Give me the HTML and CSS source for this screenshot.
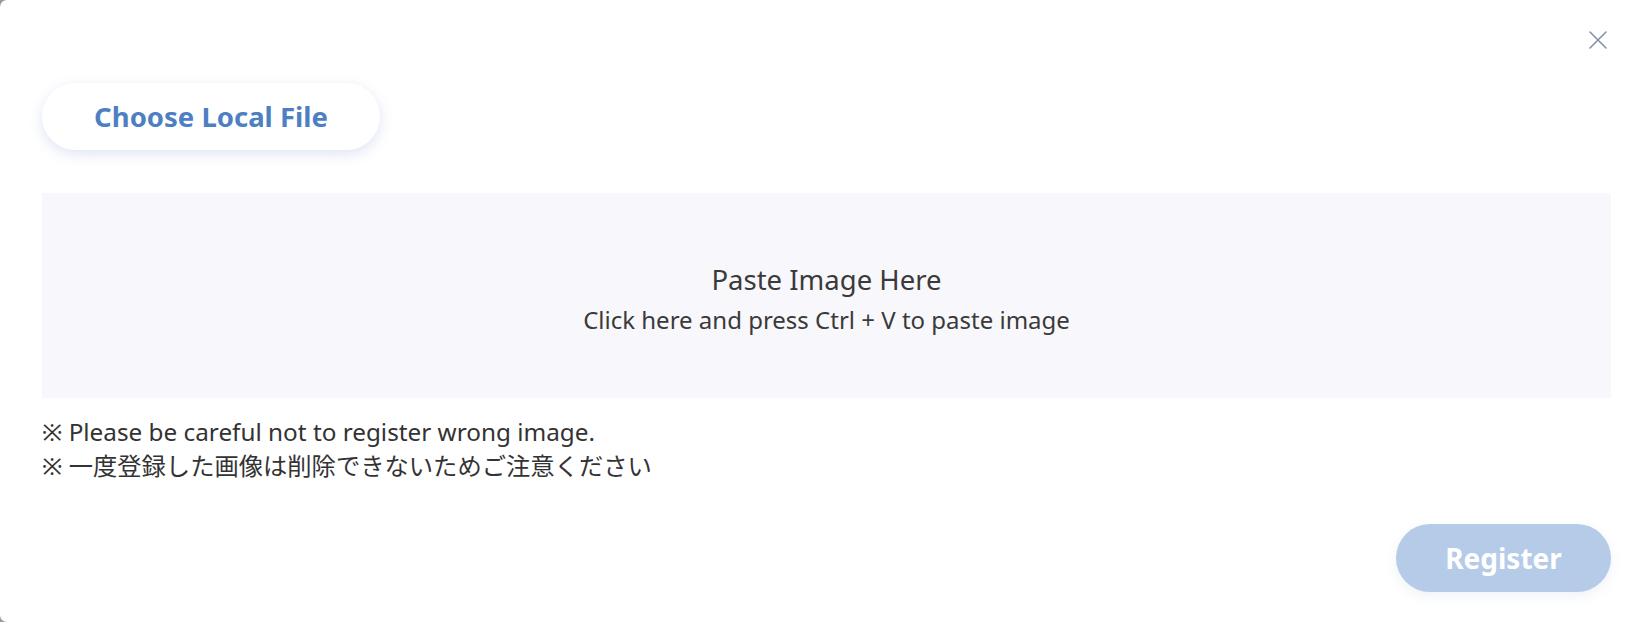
FILE: index.html
```html
<!DOCTYPE html>
<html lang="en">
<head>
<meta charset="utf-8">
<title>Register Image</title>
<link rel="stylesheet" href="styles.css">
</head>
<body>
<div class="modal">
  <div class="close-row">
    <button class="close" aria-label="Close">
      <svg width="18" height="18" viewBox="0 0 18 18"><path d="M1 1 L17 17 M17 1 L1 17" stroke="#8690a3" stroke-width="1.6" stroke-linecap="round" fill="none"/></svg>
    </button>
  </div>
  <button class="choose">Choose Local File</button>
  <div class="paste">
    <div class="paste-title">Paste Image Here</div>
    <div class="paste-sub">Click here and press Ctrl + V to paste image</div>
  </div>
  <div class="notes">
    <div>※ Please be careful not to register wrong image.</div>
    <div>※ 一度登録した画像は削除できないためご注意ください</div>
  </div>
  <button class="register">Register</button>
</div>
</body>
</html>
```

FILE: styles.css
```css
html, body {
  margin: 0;
  padding: 0;
}
body {
  background: #9a9a9a;
  font-family: "Noto Sans", "Noto Sans CJK JP", sans-serif;
  color: #333;
}
.modal {
  box-sizing: border-box;
  width: 1644px;
  height: 622px;
  background: #fff;
  border-radius: 7px 0 0 7px;
  padding: 0 33px 0 42px;
  display: flex;
  flex-direction: column;
}
.close-row {
  display: flex;
  justify-content: flex-end;
  padding-top: 31px;
  padding-right: 4px;
}
.close {
  border: 0;
  background: none;
  padding: 0;
  width: 18px;
  height: 18px;
  display: block;
  cursor: pointer;
}
.close svg { display: block; }
.choose {
  margin-top: 34px;
  align-self: flex-start;
  width: 338px;
  height: 67px;
  padding: 0;
  border: 0;
  border-radius: 34px;
  background: #fff;
  box-shadow: 0 4px 14px rgba(90, 120, 190, 0.2);
  font-family: "Noto Sans", sans-serif;
  font-weight: 700;
  font-size: 27.5px;
  color: #4e7fc3;
  cursor: pointer;
}
.paste {
  margin-top: 43px;
  height: 205px;
  box-sizing: border-box;
  padding-top: 9px;
  background: #f8f8fc;
  display: flex;
  flex-direction: column;
  align-items: center;
  justify-content: center;
}
.paste-title {
  font-size: 27.5px;
  line-height: 40px;
  color: #3a3a3a;
}
.paste-sub {
  font-size: 24px;
  line-height: 40px;
  color: #3a3a3a;
}
.notes {
  margin-top: 17px;
  font-size: 24.3px;
  line-height: 34px;
  color: #333;
}
.register {
  margin-top: 41px;
  align-self: flex-end;
  width: 215px;
  height: 68px;
  padding: 0;
  border: 0;
  border-radius: 34px;
  background: #b5cbe8;
  box-shadow: 0 4px 12px rgba(120, 150, 200, 0.12);
  font-family: "Noto Sans", sans-serif;
  font-weight: 700;
  font-size: 28px;
  color: #fff;
  cursor: pointer;
}
```
